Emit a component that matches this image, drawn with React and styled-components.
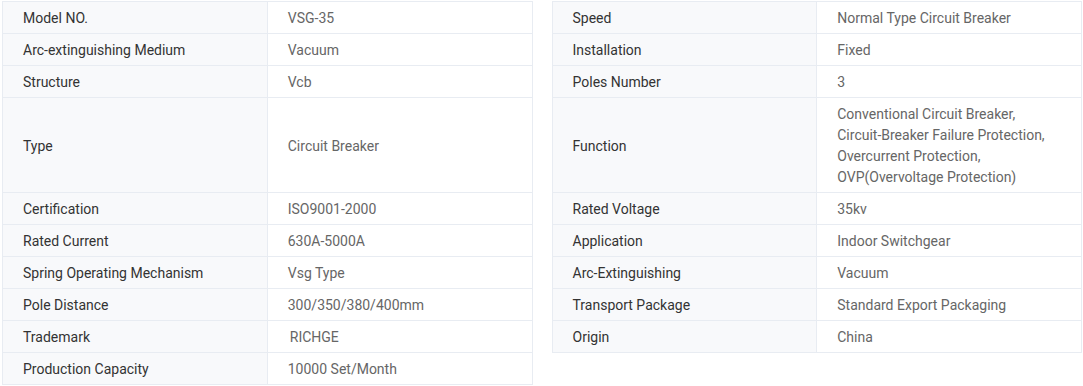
import styled, { createGlobalStyle } from 'styled-components'

const GlobalStyle = createGlobalStyle`
    html, body {
        margin: 0;
        background: #fff;
    }
`

const Wrapper = styled.div`
    padding: 1px 2px;
    font-family: Roboto, 'Liberation Sans', sans-serif;
    font-size: 14px;
`

const Table = styled.table`
    width: 1080px;
    border-collapse: collapse;
    table-layout: fixed;
`

const Label = styled.td`
    border: 1px solid #e8ecf2;
    background: #f8f9fb;
    color: #333;
    padding: 6px 20px 4px;
    line-height: 21px;
    vertical-align: middle;
`

const Value = styled.td`
    border: 1px solid #e8ecf2;
    background: #fff;
    color: #666;
    padding: 6px 20px 4px ${(props) => (props.$indent ? '22px' : '20px')};
    line-height: 21px;
    vertical-align: middle;
`

const Spacer = styled.td`
    width: 20px;
    padding: 0;
    border: none;
`

const left = [
    ['Model NO.', 'VSG-35'],
    ['Arc-extinguishing Medium', 'Vacuum'],
    ['Structure', 'Vcb'],
    ['Type', 'Circuit Breaker'],
    ['Certification', 'ISO9001-2000'],
    ['Rated Current', '630A-5000A'],
    ['Spring Operating Mechanism', 'Vsg Type'],
    ['Pole Distance', '300/350/380/400mm'],
    ['Trademark', 'RICHGE', true],
    ['Production Capacity', '10000 Set/Month'],
]

const right = [
    ['Speed', 'Normal Type Circuit Breaker'],
    ['Installation', 'Fixed'],
    ['Poles Number', '3'],
    [
        'Function',
        [
            'Conventional Circuit Breaker,',
            'Circuit-Breaker Failure Protection,',
            'Overcurrent Protection,',
            'OVP(Overvoltage Protection)',
        ],
    ],
    ['Rated Voltage', '35kv'],
    ['Application', 'Indoor Switchgear'],
    ['Arc-Extinguishing', 'Vacuum'],
    ['Transport Package', 'Standard Export Packaging'],
    ['Origin', 'China'],
]

const renderValue = (v) =>
    Array.isArray(v)
        ? v.map((line, i) => (
              <span key={i}>
                  {line}
                  {i < v.length - 1 && <br />}
              </span>
          ))
        : v

const App = () => {
    return (
        <Wrapper>
            <GlobalStyle />
            <Table>
                <colgroup>
                    <col />
                    <col />
                    <col style={{ width: 20 }} />
                    <col />
                    <col />
                </colgroup>
                <tbody>
                    {left.map((row, i) => (
                        <tr key={i}>
                            <Label>{row[0]}</Label>
                            <Value $indent={row[2]}>{row[1]}</Value>
                            <Spacer />
                            {right[i] && (
                                <>
                                    <Label>{right[i][0]}</Label>
                                    <Value>{renderValue(right[i][1])}</Value>
                                </>
                            )}
                        </tr>
                    ))}
                </tbody>
            </Table>
        </Wrapper>
    )
}

export default App
